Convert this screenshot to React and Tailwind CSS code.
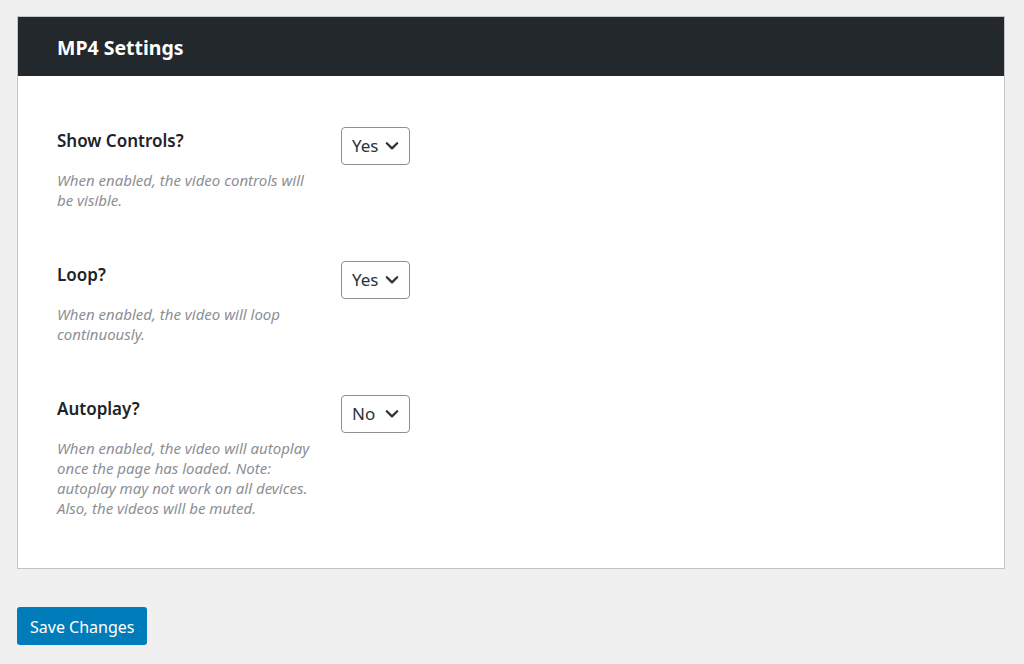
import React from "react";

function Chevron() {
  return (
    <svg width="16" height="16" viewBox="0 0 20 20">
      <path d="M3.5 6.5 L10 13 L16.5 6.5" fill="none" stroke="#2c3338" strokeWidth="2.8" strokeLinecap="round" strokeLinejoin="round" />
    </svg>
  );
}

function Row({ label, lines, value, className }) {
  return (
    <div className={"flex " + (className || "")}>
      <div className="w-[284px] shrink-0">
        <div className="text-[17px] leading-[24px] font-semibold text-[#1d2327] mt-[2px]">{label}</div>
        <div className="mt-[17px] text-[15px] leading-[20px] italic text-[#8c8f94]">
          {lines.map((l, i) => (
            <div key={i} className="whitespace-nowrap">{l}</div>
          ))}
        </div>
      </div>
      <div className="w-[69px] h-[38px] border border-[#8c8f94] rounded-[4px] bg-white flex items-center justify-between pl-[10px] pr-[9px] text-[17px] text-[#2c3338]">
        <span>{value}</span>
        <Chevron />
      </div>
    </div>
  );
}

export default function App() {
  return (
    <div className="min-h-[664px] bg-[#f0f0f1] pt-[16px] pl-[17px] pr-[19px] pb-[19px]" style={{ fontFamily: '"Noto Sans", "Open Sans", sans-serif' }}>
      <div className="border border-[#c3c4c7] bg-white w-[988px]">
        <div className="bg-[#23282d] h-[59px] flex items-center pl-[39px]">
          <h2 className="text-white text-[19.5px] font-bold mt-[2px]">MP4 Settings</h2>
        </div>
        <div className="pl-[39px] pt-[51px] pb-[50px]">
          <Row
            label="Show Controls?"
            value="Yes"
            lines={["When enabled, the video controls will", "be visible."]}
          />
          <Row
            className="mt-[51px]"
            label="Loop?"
            value="Yes"
            lines={["When enabled, the video will loop", "continuously."]}
          />
          <Row
            className="mt-[51px]"
            label="Autoplay?"
            value="No"
            lines={[
              "When enabled, the video will autoplay",
              "once the page has loaded. Note:",
              "autoplay may not work on all devices.",
              "Also, the videos will be muted.",
            ]}
          />
        </div>
      </div>
      <button className="mt-[38px] h-[38px] px-[13px] rounded-[3px] bg-[#007cba] text-white text-[16px] leading-[36px] pt-[2px]">
        Save Changes
      </button>
    </div>
  );
}
